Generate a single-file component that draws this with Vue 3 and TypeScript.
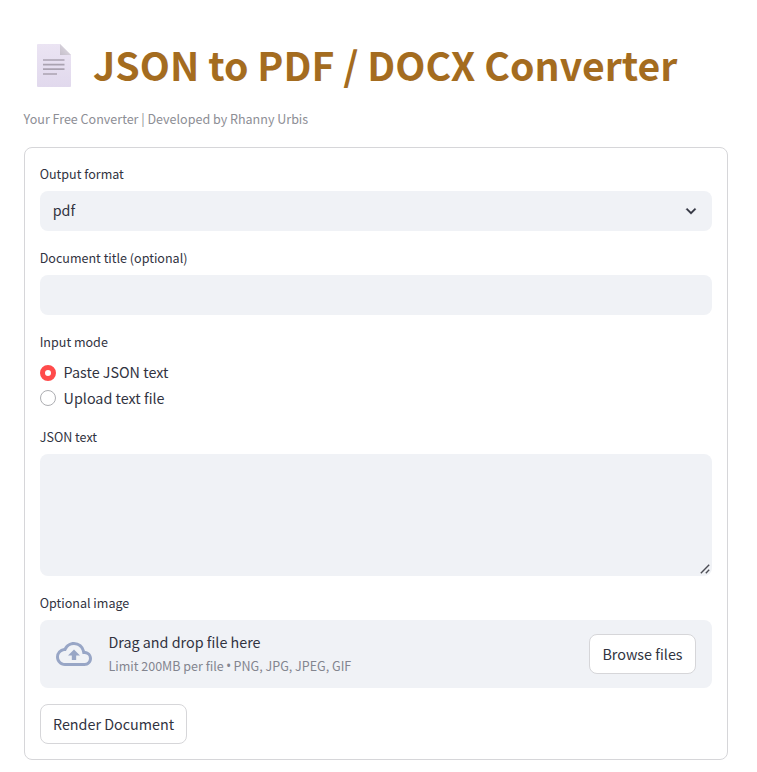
<script setup lang="ts">
import { ref } from 'vue'

const modes: string[] = ['Paste JSON text', 'Upload text file']
const mode = ref<string>(modes[0])
const title = ref<string>('')
const json = ref<string>('')
</script>

<template>
  <main class="page">
    <h1 class="heading">
      <svg class="doc" width="34" height="43" viewBox="0 0 34 43" aria-hidden="true">
        <defs>
          <linearGradient id="sheet" x1="0" y1="0" x2="0" y2="1">
            <stop offset="0" stop-color="#ebe4f3" />
            <stop offset="1" stop-color="#e1d9ed" />
          </linearGradient>
          <linearGradient id="fold" x1="1" y1="0" x2="0" y2="1">
            <stop offset="0.45" stop-color="#d6d1da" />
            <stop offset="1" stop-color="#c5bfca" />
          </linearGradient>
        </defs>
        <path d="M1 0H23L34 11V42Q34 43 33 43H1Q0 43 0 42V1Q0 0 1 0Z" fill="url(#sheet)" />
        <path d="M23 0L34 11H23Z" fill="url(#fold)" />
        <path d="M6 16H27.5M6 20.7H27.5M6 25.2H27.5M6 30H20" stroke="#aaa3b1" stroke-width="1.7" />
      </svg>
      <span class="heading-text">JSON to PDF / DOCX Converter</span>
    </h1>
    <p class="caption">Your Free Converter | Developed by Rhanny Urbis</p>

    <form class="card" @submit.prevent>
      <section>
        <div class="label">Output format</div>
        <div class="field select">
          <span class="value">pdf</span>
          <svg width="20" height="20" viewBox="0 0 24 24"><path d="M16.59 8.59L12 13.17 7.41 8.59 6 10l6 6 6-6z" fill="#31333f" stroke="#31333f" stroke-width=".4" /></svg>
        </div>
      </section>
      <section>
        <label class="label" for="title">Document title (optional)</label>
        <input id="title" v-model="title" class="field" type="text" />
      </section>
      <section>
        <div class="label">Input mode</div>
        <div class="radios">
          <label v-for="m in modes" :key="m" class="radio" @click="mode = m">
            <span class="dot" :class="{ on: mode === m }"></span>
            <span class="radio-text">{{ m }}</span>
          </label>
        </div>
      </section>
      <section>
        <label class="label" for="json">JSON text</label>
        <div class="area-wrap">
          <textarea id="json" v-model="json" class="area"></textarea>
          <svg class="grip" width="10" height="10" viewBox="0 0 10 10"><path d="M.8 9.2L9.2 .8M5.8 9.2L9.2 5.8" stroke="#4b4c54" stroke-width="1.4" /></svg>
        </div>
      </section>
      <section>
        <div class="label">Optional image</div>
        <div class="drop">
          <svg class="cloud" width="36" height="36" viewBox="0 0 24 24" fill="#98a6c6"><path d="M19.35 10.04A7.49 7.49 0 0012 4C9.11 4 6.6 5.64 5.35 8.04A5.994 5.994 0 000 14c0 3.31 2.69 6 6 6h13c2.76 0 5-2.24 5-5 0-2.64-2.05-4.78-4.65-4.96zM19 18H6c-2.21 0-4-1.79-4-4 0-2.05 1.53-3.76 3.56-3.97l1.07-.11.5-.95A5.469 5.469 0 0112 6c2.62 0 4.88 1.86 5.39 4.43l.3 1.5 1.53.11A2.98 2.98 0 0122 15c0 1.65-1.35 3-3 3zM8 13h2.55v3h2.9v-3H16l-4-4z" /></svg>
          <div class="drop-text">
            <span class="drop-main">Drag and drop file here</span>
            <span class="drop-hint">Limit 200MB per file <span class="bullet">•</span> PNG, JPG, JPEG, GIF</span>
          </div>
          <button type="button" class="btn browse">Browse files</button>
        </div>
      </section>
      <button type="submit" class="btn render">Render Document</button>
    </form>
  </main>
</template>

<style>
body {
  margin: 0;
  background: #fff;
}
</style>

<style scoped>
.page {
  box-sizing: border-box;
  width: 757px;
  height: 772px;
  padding: 0 29px 0 24px;
  overflow: hidden;
  color: #31333f;
  font-family: "Noto Sans CJK SC", "Noto Sans", sans-serif;
  font-size: 14.33px;
  line-height: 24px;
}
.heading {
  display: flex;
  align-items: center;
  height: 54px;
  margin: 0;
  padding: 38px 0 16px 13px;
  color: #a46c1f;
  font-size: 39.2px;
  font-weight: 700;
  line-height: 54px;
  white-space: nowrap;
}
.heading-text {
  margin-top: -2px;
}
.doc {
  flex: none;
  margin-right: 22px;
}
.caption {
  height: 24px;
  margin: -1px 0 16px;
  color: #8d8e95;
  font-size: 12.54px;
  text-indent: -0.4px;
  white-space: nowrap;
}
.card {
  box-sizing: border-box;
  display: flex;
  flex-direction: column;
  gap: 16px;
  width: 704px;
  height: 613px;
  padding: 15px;
  border: 1px solid #d6d6d9;
  border-radius: 8px;
}
.label {
  display: block;
  height: 28px;
  font-size: 12.54px;
  line-height: 22px;
  text-indent: -0.3px;
}
.field {
  box-sizing: border-box;
  display: block;
  width: 100%;
  height: 40px;
  padding: 0 11px 0 13px;
  border: 0;
  border-radius: 8px;
  outline: 0;
  background: #f0f2f6;
  color: inherit;
  font: inherit;
}
.select {
  display: flex;
  align-items: center;
  justify-content: space-between;
}
.value {
  margin-top: -2px;
  margin-left: -0.3px;
}
.radios {
  display: flex;
  flex-direction: column;
  height: 51px;
  padding-top: 1px;
  box-sizing: border-box;
}
.radio {
  display: flex;
  align-items: center;
  gap: 8px;
  height: 25.5px;
}
.radio:first-child .radio-text {
  margin-top: -2px;
}
.radio-text {
  margin-left: -0.4px;
}
.radio:last-child .radio-text {
  margin-top: 1px;
}
.dot {
  box-sizing: border-box;
  width: 16px;
  height: 16px;
  border: 1px solid #adaeb2;
  border-radius: 50%;
  background: #fff;
}
.dot.on {
  border: 5px solid #ff4b4b;
}
.area-wrap {
  position: relative;
  height: 122px;
}
.area {
  box-sizing: border-box;
  display: block;
  width: 100%;
  height: 122px;
  padding: 12px;
  border: 0;
  border-radius: 8px;
  outline: 0;
  background: #f0f2f6;
  color: inherit;
  font: inherit;
  resize: none;
}
.grip {
  position: absolute;
  right: 2px;
  bottom: 2px;
}
.drop {
  box-sizing: border-box;
  display: flex;
  align-items: center;
  height: 68px;
  padding: 0 16px;
  border-radius: 8px;
  background: #f0f2f6;
}
.cloud {
  flex: none;
}
.drop-text {
  display: flex;
  flex-direction: column;
  margin-left: 16.4px;
}
.drop-hint {
  color: #83858f;
  font-size: 12.54px;
}
.bullet {
  margin: 0 -0.5px;
  font-family: "Open Sans", sans-serif;
  font-size: 14px;
  line-height: 1;
}
.btn {
  box-sizing: border-box;
  height: 40px;
  padding: 0;
  border: 1px solid #d6d6d9;
  border-radius: 8px;
  background: #fff;
  color: inherit;
  font: inherit;
  white-space: nowrap;
}
.browse {
  width: 107px;
  margin-left: auto;
}
.render {
  width: 147px;
}
</style>
